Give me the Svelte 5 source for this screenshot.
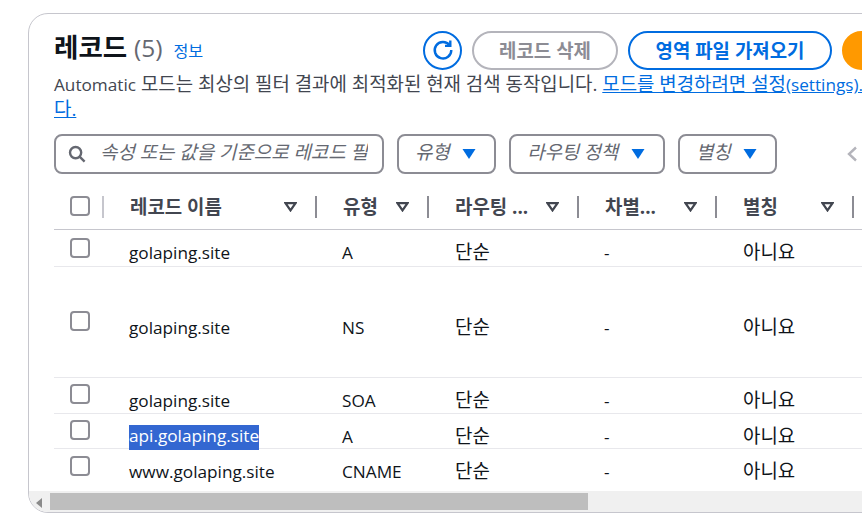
<script lang="ts">
  const columns = [
    { label: '레코드 이름', width: 213 },
    { label: '유형', width: 112 },
    { label: '라우팅 ...', width: 150 },
    { label: '차별...', width: 138 },
    { label: '별칭', width: 137 }
  ];

  const records = [
    { name: 'golaping.site', type: 'A', height: 37, boxTop: 8, tall: false, selected: false },
    { name: 'golaping.site', type: 'NS', height: 111, boxTop: 44, tall: true, selected: false },
    { name: 'golaping.site', type: 'SOA', height: 36, boxTop: 6, tall: false, selected: false },
    { name: 'api.golaping.site', type: 'A', height: 35, boxTop: 6, tall: false, selected: true },
    { name: 'www.golaping.site', type: 'CNAME', height: 43, boxTop: 7, tall: false, selected: false }
  ];

  const filters = ['유형', '라우팅 정책', '별칭'];
</script>

<main class="page">
  <section class="card">
    <div class="content">
      <header class="head">
        <h2 class="title">레코드 <span class="count">(5)</span> <a class="info">정보</a></h2>
        <div class="actions">
          <button class="refresh" aria-label="새로 고침">
            <svg width="22" height="22" viewBox="0 0 22 22" fill="none" stroke="currentColor" stroke-width="2.4">
              <path d="M17.6 6.2 A8.3 8.3 0 1 0 19.3 11" />
              <path d="M18.3 1.6 V6.9 H13" stroke-linejoin="miter" />
            </svg>
          </button>
          <button class="pill disabled">레코드 삭제</button>
          <button class="pill normal">영역 파일 가져오기</button>
          <button class="pill primary" aria-label="레코드 생성"></button>
        </div>
      </header>

      <p class="desc"><span class="en">Automatic</span> 모드는 최상의 필터 결과에 최적화된 현재 검색 동작입니다. <a href="#settings">모드를 변경하려면 설정<span class="en">(settings).</span><br />다.</a></p>

      <div class="filters">
        <div class="search">
          <svg width="18" height="18" viewBox="0 0 18 18" fill="none" stroke="#656871" stroke-width="2.4">
            <circle cx="7.6" cy="7.6" r="5.6" />
            <path d="M11.6 11.6 L16.6 16.6" />
          </svg>
          <span class="placeholder">속성 또는 값을 기준으로 레코드 필터링</span>
        </div>
        {#each filters as filter}
          <div class="select">
            <span class="select-text">{filter}</span>
            <svg width="14" height="10" viewBox="0 0 14 10"><path d="M0.5 0 H13.5 L7 10 Z" fill="#006ce0" /></svg>
          </div>
        {/each}
        <svg class="prev" width="10" height="16" viewBox="0 0 10 16" fill="none" stroke="#b4b4bb" stroke-width="2.4">
          <path d="M9 1.5 L2 8 L9 14.5" />
        </svg>
      </div>

      <div class="table">
        <div class="row header">
          <div class="check-cell">
            <span class="box"></span>
            <span class="rule light"></span>
          </div>
          {#each columns as col}
            <div class="th" style="width: {col.width}px">
              <span class="label">{col.label}</span>
              <svg width="13" height="10" viewBox="0 0 13 10" fill="none" stroke="#424650" stroke-width="2.2">
                <path d="M1.5 1.2 H11.5 L6.5 8.4 Z" />
              </svg>
              <span class="rule"></span>
            </div>
          {/each}
        </div>

        {#each records as rec}
          <div class="row body" style="height: {rec.height}px">
            <div class="check-cell" style="padding-top: {rec.boxTop}px"><span class="box"></span></div>
            <div class="td en" class:tall={rec.tall} style="width: {columns[0].width}px">
              <span class:selected={rec.selected}>{rec.name}</span>
            </div>
            <div class="td en" class:tall={rec.tall} style="width: {columns[1].width}px">{rec.type}</div>
            <div class="td ko" class:tall={rec.tall} style="width: {columns[2].width}px">단순</div>
            <div class="td en" class:tall={rec.tall} style="width: {columns[3].width}px">-</div>
            <div class="td ko" class:tall={rec.tall} style="width: {columns[4].width}px">아니요</div>
          </div>
        {/each}
      </div>
    </div>

    <div class="scrollbar">
      <span class="arrow"></span>
      <span class="thumb"></span>
    </div>
  </section>
</main>

<style>
  :global(body) {
    margin: 0;
    background: #fff;
    overflow: hidden;
  }

  .page {
    width: 862px;
    height: 526px;
    overflow: hidden;
    padding: 13px 0 0 28px;
    box-sizing: border-box;
    font-family: "Open Sans", "Noto Sans CJK KR", sans-serif;
    font-size: 18.9px;
    color: #0f141a;
  }

  /* latin runs sit smaller than the hangul around them */
  .en {
    font-size: 17.2px;
  }

  .card {
    width: 1100px;
    height: 500px;
    box-sizing: border-box;
    border: 1px solid #c6c6cd;
    border-radius: 20px;
    overflow: hidden;
  }

  .content {
    height: 477px;
    padding: 16px 0 0 25px;
    box-sizing: border-box;
  }

  .head {
    display: flex;
    align-items: center;
    height: 40px;
  }

  .title {
    width: 369px;
    margin: 0;
    font-size: 26.5px;
    line-height: 36px;
    font-weight: 700;
    white-space: nowrap;
    margin-top: -2px;
  }

  .count {
    font-size: 24.5px;
    font-weight: 400;
    color: #656871;
  }

  .info {
    margin-left: 4px;
    font-size: 16.2px;
    font-weight: 400;
    color: #006ce0;
  }

  .actions {
    display: flex;
    gap: 10px;
    align-items: center;
  }

  .refresh {
    width: 39px;
    height: 39px;
    padding: 0;
    display: flex;
    align-items: center;
    justify-content: center;
    background: #fff;
    color: #006ce0;
    border: 2px solid #006ce0;
    border-radius: 50%;
  }

  .pill {
    height: 39px;
    padding: 0;
    box-sizing: border-box;
    border-radius: 20px;
    font-family: inherit;
    font-size: 18.9px;
    font-weight: 700;
    background: #fff;
    white-space: nowrap;
  }

  .disabled {
    width: 146px;
    border: 2px solid #b4b4bb;
    color: #8c8c94;
  }

  .normal {
    width: 204px;
    border: 2px solid #006ce0;
    color: #006ce0;
  }

  .primary {
    width: 160px;
    border: 2px solid #ff9900;
    background: #ff9900;
  }

  .desc {
    margin: 2px 0 0;
    line-height: 25px;
    color: #424650;
    white-space: nowrap;
  }

  .desc a {
    color: #006ce0;
    text-decoration: underline;
  }

  .filters {
    display: flex;
    align-items: center;
    gap: 13px;
    margin-top: 12px;
    height: 40px;
  }

  .search {
    display: flex;
    align-items: center;
    width: 330px;
    height: 40px;
    flex: none;
    box-sizing: border-box;
    padding-left: 14px;
    border: 2px solid #8c8c94;
    border-radius: 8px;
  }

  .search svg {
    margin-left: -2px;
  }

  .placeholder {
    width: 268px;
    margin-left: 14px;
    margin-bottom: 6px;
    font-style: italic;
    color: #656871;
    white-space: nowrap;
    overflow: hidden;
  }

  .select {
    display: flex;
    align-items: center;
    flex: none;
    height: 40px;
    box-sizing: border-box;
    padding: 0 18px 0 16px;
    gap: 13px;
    border: 2px solid #8c8c94;
    border-radius: 8px;
    white-space: nowrap;
  }

  .select-text {
    margin-bottom: 6px;
    font-style: italic;
    letter-spacing: -0.2px;
    color: #656871;
  }

  .prev {
    margin-left: 57px;
    flex: none;
  }

  .table {
    margin-top: 13px;
    width: 1040px;
  }

  .row {
    display: flex;
    box-sizing: border-box;
  }

  .header {
    height: 43px;
    border-bottom: 1px solid #c6c6cd;
  }

  .body {
    border-bottom: 1px solid #e8e8ec;
  }

  .body:last-child {
    border-bottom: none;
  }

  .check-cell {
    position: relative;
    width: 50px;
    flex: none;
    padding-left: 16px;
    box-sizing: border-box;
  }

  .header .check-cell {
    padding-top: 9px;
  }

  .box {
    display: block;
    width: 20px;
    height: 20px;
    box-sizing: border-box;
    border: 2px solid #8c8c94;
    border-radius: 4px;
    background: #fff;
  }

  .rule {
    flex: none;
    width: 2px;
    height: 22px;
    background: #8c8c94;
    margin-left: auto;
  }

  .rule.light {
    position: absolute;
    top: 9px;
    right: 0;
    background: #c6c6cd;
  }

  .th {
    display: flex;
    align-items: center;
    flex: none;
    height: 40px;
    padding: 0 0 0 26px;
    box-sizing: border-box;
    font-weight: 700;
    color: #424650;
    white-space: nowrap;
  }

  .th .label {
    flex: 1;
    margin-bottom: 2px;
  }

  .th svg {
    margin-right: 18px;
  }

  .td {
    flex: none;
    padding: 10px 0 0 25px;
    box-sizing: border-box;
    line-height: 25px;
    white-space: nowrap;
  }

  .td.ko {
    padding-left: 26px;
  }

  .td.tall {
    padding-top: 48px;
  }

  .selected {
    display: inline-block;
    vertical-align: top;
    margin-top: 1px;
    padding-bottom: 4px;
    line-height: 21px;
    background: #3367d1;
    color: #fff;
  }

  .scrollbar {
    position: relative;
    height: 22px;
    background: #f0f0f0;
  }

  .arrow {
    position: absolute;
    left: 7px;
    top: 7px;
    border-right: 6px solid #8a8a8a;
    border-top: 5px solid transparent;
    border-bottom: 5px solid transparent;
  }

  .thumb {
    position: absolute;
    left: 21px;
    top: 2px;
    width: 538px;
    height: 17px;
    background: #bebebe;
  }
</style>
